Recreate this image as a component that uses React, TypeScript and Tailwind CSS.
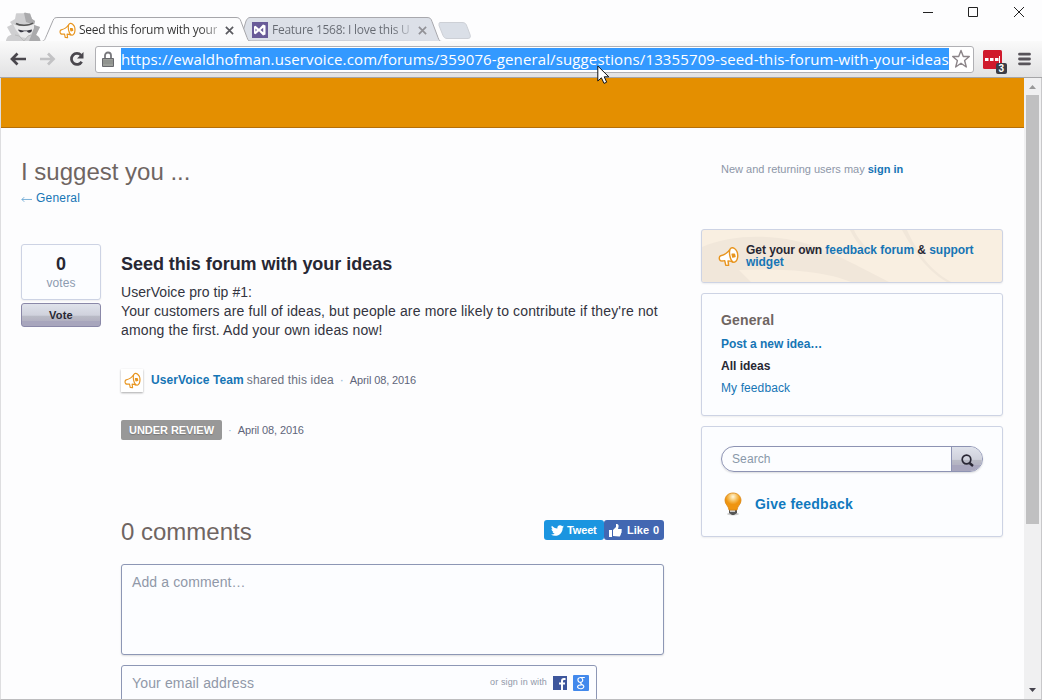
import React from "react";

const Megaphone = ({ className }: { className: string }) => (
  <svg viewBox="0 0 22 22" className={className} fill="#fff" stroke="#e8951f" strokeWidth="1.5" strokeLinejoin="round">
    <path d="M12.6 3.6C9.8 7.600 6.700 9.400 2.800 10.200 1 10.800.9 13.800 2.300 15.200c.7.8 2.300.4 4.800.3l1 4.600 3 .2-.6-4.700c2 0 3.600.6 5.500 1.400" />
    <path d="M12.600 3.300c1.200-1.700 3-1.900 4.700-.7 2.600 1.900 3.700 6.200 3.200 9.600-.5 3.400-2.500 5.400-4.500 4.700-3.100-1.300-4.900-9.800-3.400-13.600z" />
    <path d="M14.800 8.500l2.400.1.6 2.400-2.300.5z" fill="#e8951f" />
  </svg>
);

const Incognito = () => (
  <svg viewBox="0 0 36 29" className="h-[29px] w-9">
    <path d="M1 29c.5-4 3-6 5.500-6L2 15c2-.8 3-2 5-2.500L5 10l5-3 1-5.500c3-1 7 .5 8-.5 2-1 4 .5 6 .5l2 5.500 3 2-1 4 6 2-4 8c2.500 1 4 3 4.500 6z" fill="#cfcfd1" />
    <path d="M19 1c2-1 4 .5 6 .5l2 5.500 3 2-1 4 6 2-4 8c2.500 1 4 3 4.500 6H24l4-10 1-6-8-3z" fill="#aaaaac" />
    <path d="M8 12c6 3 14 3 21 0l0 4-3 6-5 4-5-1-5-7z" fill="#eaeaeb" />
    <path d="M11 11.500c4 2.500 13 2.500 17-.5" stroke="#555" strokeWidth="1.500" fill="none" />
    <path d="M13 17.500l5 1h4l5-1c0 4-4 4-5 1.800h-3c-2 2-5 1-6-1.800z" fill="#393944" />
    <path d="M10 23l4 1 5 5 4-5 3-1" stroke="#bbb" fill="none" />
  </svg>
);

function TabStrip() {
  return (
    <div className="relative h-[41px] w-full shrink-0 font-['Open_Sans',sans-serif] text-[12px]">
      <svg className="absolute inset-0 h-[42px] w-full" viewBox="0 0 1042 42" fill="none">
        <path d="M0 41.500H1042" stroke="#b3b3b6" />
        <path d="M248 41c-3 0-3-5-5-10l3-10c1-2 2-3.500 4-3.500h177c3 0 4 1 5 4l6 16c1 3 2 4 4 4z" fill="#dce0e8" stroke="#a8a8ad" />
        <path d="M440 22.500h22c3 0 4 1 5 4l3 8c1 3 0 4-3 4h-20c-2 0-3-1-4-3l-4-10c0-2 0-3 1-3z" fill="#dadfe7" stroke="#cdd0d6" />
        <path d="M41 42c4-1 4-3 6-7l6-14c1-3 2-3.500 5-3.500h178c3 0 4 1 5 4l6 16c1 3 2 4 4 4.500z" fill="#fcfcfd" />
        <path d="M41 41.500c4 0 4-3 6-7l6-14c1-2.500 2-3 5-3h178c3 0 4 1 5 4l6 16c1 3 2 4 4 4" stroke="#a6a6aa" />
      </svg>
      <div className="relative flex h-full items-start">
        <div className="ml-[5px] mt-3 w-9"><Incognito /></div>
        <div className="ml-[18px] mt-[21px] flex h-[18px] items-center">
          <Megaphone className="h-[17px] w-[17px]" />
          <span className="ml-[3px] w-[138px] whitespace-nowrap bg-gradient-to-r from-[#333] from-88% to-[#33333366] bg-clip-text tracking-[-0.24px] text-transparent">Seed this forum with your</span>
          <svg viewBox="0 0 10 10" className="ml-[8px] h-[9px] w-[9px]" stroke="#5b5b60" strokeWidth="1.900"><path d="M1 1l8 8M9 1l-8 8" /></svg>
        </div>
        <div className="ml-[18px] mt-[21px] flex h-[18px] items-center">
          <svg viewBox="0 0 16 16" className="h-4 w-4"><path d="M0 0h16v16H0z" fill="#695b98" /><path d="M2 4.500l1.500-.7 3.500 3L11 2.500l2.500 1v9L11 13.500 7 9.200l-3.500 3-1.500-.7zM3.500 6.500v3L5 8zm5 1.500l2.700 2.300V5.700z" fill="#fff" fillRule="evenodd" /></svg>
          <span className="ml-1 w-[138px] whitespace-nowrap bg-gradient-to-r from-[#666a72] from-88% to-[#666a7244] bg-clip-text tracking-[-0.26px] text-transparent">Feature 1568: I love this U</span>
          <svg viewBox="0 0 10 10" className="ml-[8px] h-[9px] w-[9px]" stroke="#929297" strokeWidth="1.900"><path d="M1 1l8 8M9 1l-8 8" /></svg>
        </div>
      </div>
      <svg viewBox="0 0 104 14" className="absolute right-[17px] top-[5px] h-[14px] w-[104px]" fill="none" stroke="#222">
        <path d="M2 7.500h10M47.500 2.500h9v9h-9zM93 2l10 10M103 2L93 12" />
      </svg>
    </div>
  );
}

function Toolbar() {
  return (
    <div className="relative flex h-[37px] shrink-0 items-center border-b border-[#a5a5a7] bg-gradient-to-b from-[#fafafa] to-[#e2e2e3]">
      <svg viewBox="0 0 80 20" className="ml-[8px] h-5 w-20" fill="none" strokeWidth="2.700">
        <path d="M9.500 4.500L4 10l5.500 5.500M3.500 10H18" stroke="#4a474d" />
        <path d="M40 4.500l5.500 5.500-5.500 5.500M46.500 10H32" stroke="#c2c2c4" />
        <path d="M73 6.200a5.500 5.500 0 1 0 .7 6.500" stroke="#4a474d" />
        <path d="M75.500 3v6.500H69z" fill="#4a474d" />
      </svg>
      <div className="ml-[7px] flex h-[27px] w-[879px] items-center rounded-[3px] border border-[#b0b0b4] bg-white">
        <svg viewBox="0 0 12 16" className="ml-[6px] h-4 w-3"><path d="M3 8V4.500a3 3 0 0 1 6 0V8" fill="none" stroke="#77777b" strokeWidth="1.800" /><path d="M.5 7.500h11v8H.5z" fill="#9b9e99" stroke="#68686c" /><path d="M1 10h10M1 12h10" stroke="#858883" /></svg>
        <span className="ml-[7px] flex h-[22px] w-[828px] items-center whitespace-nowrap bg-[#3399ff] font-['Open_Sans',sans-serif] text-[15px] tracking-[0.126px] text-white">https://ewaldhofman.uservoice.com/forums/359076-general/suggestions/13355709-seed-this-forum-with-your-ideas</span>
        <svg viewBox="0 0 20 20" className="ml-[2px] h-5 w-5 shrink-0" fill="#fff" stroke="#8c8589" strokeWidth="1.400" strokeLinejoin="round"><path d="M10 1.500l2.300 6h6l-4.700 4 1.700 6.500L10 14.300 4.700 18l1.700-6.500-4.700-4h6z" /></svg>
      </div>
      <svg viewBox="0 0 26 25" className="ml-[8px] mt-[5px] h-[25px] w-[26px]">
        <rect x="1" y="1" width="19" height="19" rx="1.500" fill="#d01a2c" />
        <path d="M3 10.500h3.500M8 10.500h3.500M13 10.500h3.500" stroke="#fff" strokeWidth="2.800" /><path d="M17.500 7v7" stroke="#fff" />
        <rect x="14" y="14" width="11" height="11" rx="2" fill="#3b3d47" />
        <text x="16.500" y="23" fill="#fff" fontSize="10" fontWeight="700" fontFamily="Liberation Sans">3</text>
      </svg>
      <svg viewBox="0 0 13 14" className="ml-[10px] h-[14px] w-[13px]" stroke="#58545a" strokeWidth="2.800" strokeLinecap="round"><path d="M1.500 2.200h10M1.500 7h10M1.500 11.800h10" /></svg>
      <svg viewBox="0 0 14 20" className="absolute left-[597px] top-[24px] h-5 w-[14px]"><path d="M.8 1v15l3.600-3.200 2.600 5.600 2.700-1.200-2.500-5.400h4.600z" fill="#fff" stroke="#111" /></svg>
    </div>
  );
}

const glossy = "bg-[linear-gradient(#dfe2eb_0%,#cfd1dc_52%,#babcc6_53%,#b3b2c2_76%,#a8a6bd_77%,#a8a6bd_100%)]";
const card = "rounded-[3px] border border-[#cdd3e4] bg-[#fcfdff] shadow-[0_1px_2px_#0001]";

function Main() {
  return (
    <div className="flex w-[643px] flex-col">
      <h1 className="mt-[29px] h-7 text-[24px] leading-7 text-[#6f6562]">I suggest you ...</h1>
      <div className="mt-[4px] flex h-4 items-center text-[12px] text-[#1675b5]">
        <svg viewBox="0 0 12 8" className="mr-[4px] mt-[2px] h-2 w-[11px]" fill="none" stroke="#6da9d4"><path d="M12 4.500H1M3.500 2L1 4.500 3.500 7" /></svg>
        <span className="tracking-[0.2px]">General</span>
      </div>
      <div className="mt-[38px] flex">
        <div className="flex w-20 flex-col gap-[3px]">
          <div className={`flex h-14 flex-col items-center ${card}`}>
            <b className="mt-[9px] h-5 text-[18px] leading-5">0</b>
            <span className="mt-[1px] h-4 text-[12px] leading-4 tracking-[0.1px] text-[#8d9bb0]">votes</span>
          </div>
          <button className={`h-6 rounded-[3px] border border-[#8a88a8] text-[11px] font-bold tracking-[0.2px] ${glossy}`}>Vote</button>
        </div>
        <div className="ml-5 w-[543px]">
          <h2 className="mt-[9px] h-[22px] whitespace-nowrap text-[18px] font-bold leading-[22px] tracking-[-0.03px]">Seed this forum with your ideas</h2>
          <p className="mt-[8px] whitespace-nowrap text-[14px] leading-[19px] tracking-[0.14px] text-[#333440]"><span className="tracking-[0.05px]">UserVoice pro tip #1:</span><br />Your customers are full of ideas, but people are more likely to contribute if they're not<br />among the first. Add your own ideas now!</p>
          <div className="mt-[28px] flex h-6 items-center whitespace-nowrap text-[12px] text-[#6b7080]">
            <div className="flex h-[23px] w-[22px] items-center justify-center bg-white shadow-[0_1px_2px_#0005]"><Megaphone className="h-[17px] w-[17px]" /></div>
            <b className="ml-2 tracking-[0.08px] text-[#1675b5]">UserVoice Team</b><span className="ml-[3px] tracking-[0.15px]">shared this idea</span><span className="ml-[6px] text-[#8fb5d5]">·</span><span className="ml-[6px] text-[11px] tracking-[-0.12px] text-[#5f657a]">April 08, 2016</span>
          </div>
          <div className="mt-[28px] flex h-5 items-center text-[11px] text-[#5f657a]">
            <span className="flex h-5 w-[101px] items-center justify-center rounded-[2px] bg-[#989898] font-bold tracking-[-0.05px] text-white [text-shadow:0_1px_1px_#777]">UNDER REVIEW</span><span className="ml-[6px] text-[#8fb5d5]">·</span><span className="ml-[6px] tracking-[-0.12px]">April 08, 2016</span>
          </div>
          <div className="mt-[78px] flex h-7 items-center justify-between">
            <h2 className="text-[24px] leading-7 text-[#6f6562]">0 comments</h2>
            <div className="mt-[-4px] flex text-[11px] font-bold text-white">
              <span className="flex h-5 w-[60px] items-center rounded-[3px] bg-[#1b95e0] pl-[7px] tracking-[-0.15px]"><svg viewBox="0 0 24 24" className="mr-[3px] h-[13px] w-[13px]" fill="#fff"><path d="M24 4.600c-.9.400-1.800.7-2.800.8 1-.6 1.800-1.600 2.200-2.700-1 .6-2 1-3.100 1.200A4.900 4.900 0 0 0 11.900 8.400C7.800 8.200 4.200 6.200 1.700 3.200A4.900 4.900 0 0 0 3.200 9.700c-.8 0-1.600-.2-2.200-.6 0 2.300 1.600 4.400 3.900 4.900-.7.2-1.500.2-2.200.1.6 2 2.400 3.400 4.600 3.400A9.900 9.900 0 0 1 0 19.500 13.900 13.900 0 0 0 7.500 21.700c9.100 0 14.300-7.700 14-14.600 1-.7 1.800-1.600 2.500-2.500z" /></svg>Tweet</span>
              <span className="flex h-5 w-[60px] items-center whitespace-nowrap rounded-[3px] bg-[#4267b2] pl-[5px]"><svg viewBox="0 0 13 13" className="mr-[5px] h-[13px] w-[13px] shrink-0" fill="#fff"><path d="M0 6h3v7H0zM4 6l3-3V0c3-.3 3 2 2 5h3c1 0 1 1.500.4 2 .6.8.300 1.700-.4 2 .3 1-.1 1.600-.7 2 .2 1-.3 1.500-1.300 1.500L4 12z" /></svg>Like<span className="ml-[4px]">0</span></span>
            </div>
          </div>
          <div className="mt-[18px] h-[91px] rounded-[3px] border border-[#8d97b5] bg-[#fcfdff] px-[10px] pt-[8px] text-[14px] leading-[19px] tracking-[0.12px] text-[#9098a8] shadow-[0_1px_2px_#0002]">Add a comment…</div>
          <div className="mt-[10px] flex h-[36px] w-[476px] items-center rounded-t-[3px] border border-[#8d97b5] bg-[#fcfdff] pl-[10px] text-[14px] text-[#9098a8]">
            <span className="w-[358px] tracking-[0.15px]">Your email address</span>
            <span className="w-[63px] whitespace-nowrap text-[9px] tracking-[0.13px]">or sign in with</span>
            <svg viewBox="0 0 14 14" className="h-[14px] w-[14px]"><path d="M0 0h14v14H0z" fill="#3d569c" /><path d="M12.500 3H11c-1.500 0-2 .7-2 2v9M6 7.500h6" fill="none" stroke="#fff" strokeWidth="2" /></svg>
            <svg viewBox="0 0 16 16" className="ml-[6px] h-4 w-4" fill="none"><rect width="16" height="16" rx="1" fill="#4289ec" /><path d="M11.800 2.500H7.500C5.500 2.700 4.700 4 5 5.300c.3 1.700 1.600 2.300 2.800 2 1.600-.3 2.200-1.500 1.800-3C9.300 3.200 8.700 2.700 7.800 2.500M8 7.500c-.7 1 .2 1.500 1 2 1.800 1 2.200 2 1.500 3-.8 1.200-3.200 1.500-4.800.8-1.500-.7-1.500-2.200 0-3 .9-.4 1.900-.5 3-.5" stroke="#fff" strokeWidth="1.200" /></svg>
          </div>
        </div>
      </div>
    </div>
  );
}

function Sidebar() {
  return (
    <div className="ml-[37px] flex w-[302px] flex-col text-[12px]">
      <div className="ml-5 mt-[32px] h-4 whitespace-nowrap text-[11px] leading-4 text-[#8d97a8]">New and returning users may <b className="text-[#1675b5]">sign in</b></div>
      <div className="relative mt-[52px] flex h-[54px] items-center overflow-hidden rounded-[3px] border border-[#cdd3e4] bg-[#f9efe1] shadow-[0_1px_2px_#0001]">
        <svg viewBox="0 0 300 52" className="absolute inset-0 h-full w-full" fill="#f1e7da"><path d="M0 17C35 1 88 5 120 19c25 11 48 23 67 33h-38c-26-11-68-14-112-12l12 12H0z" /><path d="M148 0h4c5 11 12 17 19 24l-2 2c-10-7-16-16-21-26zM200 0h5c13 29 28 43 44 52h-4c-18-10-32-28-45-52z" /></svg>
        <Megaphone className="relative ml-4 h-[21px] w-[21px]" />
        <p className="relative ml-[7px] whitespace-nowrap font-bold leading-[12px] tracking-[-0.05px] text-[#1675b5]"><span className="text-[#272733]">Get your own</span> feedback forum <span className="text-[#272733]">&amp;</span> support<br />widget</p>
      </div>
      <div className={`mt-[10px] flex h-[123px] flex-col px-[19px] pt-[18px] text-[#1675b5] ${card}`}>
        <b className="h-4 text-[14px] leading-4 tracking-[0.15px] text-[#6f6562]">General</b>
        <b className="mt-[5px] h-[22px] leading-[22px] tracking-[-0.05px]">Post a new idea…</b>
        <b className="h-[22px] leading-[22px] text-[#272733]">All ideas</b>
        <span className="h-[22px] leading-[22px] tracking-[0.1px]">My feedback</span>
      </div>
      <div className={`mt-[10px] h-[111px] px-[19px] pt-[19px] ${card}`}>
        <div className="flex h-[26px] overflow-hidden rounded-full border border-[#8d93b3] shadow-[0_1px_2px_#0002]">
          <span className="flex w-[230px] items-center border-r border-[#8d93b3] pl-[10px] tracking-[0.1px] text-[#8998a9]">Search</span>
          <span className={`flex flex-1 items-center justify-center ${glossy}`}><svg viewBox="0 0 13 13" className="mt-[3px] h-[13px] w-[13px]" fill="none" stroke="#292735"><circle cx="5.500" cy="5.500" r="4.300" strokeWidth="1.700" /><path d="M8.500 9l3.500 3" strokeWidth="2.400" /></svg></span>
        </div>
        <div className="mt-[20px] flex h-6 items-center">
          <svg viewBox="0 0 18 24" className="ml-[3px] h-6 w-[18px]">
            <defs><radialGradient id="bulb" cx=".5" cy=".22" r=".7"><stop stopColor="#fff8dd" /><stop offset=".4" stopColor="#f5bb54" /><stop offset=".65" stopColor="#ef9511" /></radialGradient></defs>
            <ellipse cx="9" cy="22" rx="6" ry="1.500" fill="#ccc" /><path d="M5 17h8v4l-3 2H8l-3-2z" fill="#555" /><path d="M6 19h5" stroke="#eee" strokeWidth="1.500" />
            <path d="M9 1c5 0 8 3.500 8 7.500 0 4-3.500 5-4 9.500H5c-.5-4.500-4-5.500-4-9.500C1 4.500 4 1 9 1z" fill="url(#bulb)" stroke="#d98512" strokeWidth=".8" />
          </svg>
          <b className="ml-[13px] text-[14px] tracking-[0.23px] text-[#1179be]">Give feedback</b>
        </div>
      </div>
    </div>
  );
}

export default function App() {
  return (
    <div className="flex h-[700px] w-[1042px] flex-col overflow-hidden bg-[#fdfdfe] font-['Liberation_Sans',Arial,sans-serif] text-[#272733]">
      <TabStrip />
      <Toolbar />
      <div className="flex h-[622px] shrink-0 border-b border-l border-r border-b-[#bdbdbf] border-l-[#dedee0] border-r-[#c8c8ca]">
        <div className="flex w-[1023px] flex-col overflow-hidden">
          <div className="h-[50px] shrink-0 border-b border-[#b56f08] bg-[#e48f00]" />
          <div className="mt-[1px] flex pl-5"><Main /><Sidebar /></div>
        </div>
        <div className="flex flex-1 flex-col items-center bg-[#f0f0f1]">
          <svg viewBox="0 0 7 4" className="mt-[7px] h-1 w-[7px] shrink-0" fill="#999"><path d="M0 4h7L3.500 0z" /></svg>
          <div className="mt-[6px] h-[429px] w-[13px] bg-[#c0c0c1]" />
          <svg viewBox="0 0 7 4" className="mb-[7px] mt-auto h-1 w-[7px] shrink-0" fill="#45434d"><path d="M0 0h7L3.500 4z" /></svg>
        </div>
      </div>
    </div>
  );
}
